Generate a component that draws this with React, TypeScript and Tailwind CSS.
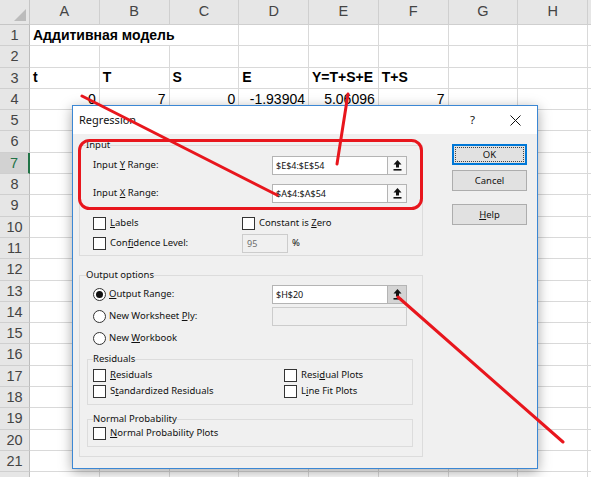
import React from "react";

type Cell = { text: string; bold?: boolean; right?: boolean; span?: number };

const COLS = ["A", "B", "C", "D", "E", "F", "G", "H", ""];
const ROWS = Array.from({ length: 22 }, (_, i) => i + 1);

const cells: Record<string, Cell> = {
  A1: { text: "Аддитивная модель", bold: true, span: 3 },
  A3: { text: "t", bold: true },
  B3: { text: "T", bold: true },
  C3: { text: "S", bold: true },
  D3: { text: "E", bold: true },
  E3: { text: "Y=T+S+E", bold: true },
  F3: { text: "T+S", bold: true },
  A4: { text: "0", right: true },
  B4: { text: "7", right: true },
  C4: { text: "0", right: true },
  D4: { text: "-1.93904", right: true },
  E4: { text: "5.06096", right: true },
  F4: { text: "7", right: true },
};

// cells hidden under the A1 span
const covered = new Set(["B1", "C1"]);

function Sheet() {
  return (
    <div className="grid grid-cols-[30px_repeat(8,69.75px)_20px] grid-rows-[25px_repeat(22,21.3px)] font-['Liberation_Sans',Arial,sans-serif] text-[14px] text-black">
      <div className="relative border-b border-r border-[#c6c6c6] bg-[#e6e6e6]">
        <svg className="absolute bottom-[3px] right-[3px]" width="12" height="12" viewBox="0 0 12 12">
          <polygon points="12,0 12,12 0,12" fill="#bcbcbc" />
        </svg>
      </div>
      {COLS.map((c, i) => (
        <div
          key={`h${i}`}
          className="grid place-items-center border-b border-r border-[#cfcfcf] bg-[#e6e6e6] text-[14.5px] text-[#444]"
        >
          {c}
        </div>
      ))}
      {ROWS.map((r) => (
        <React.Fragment key={r}>
          <div
            className={
              r === 7
                ? "grid place-items-center border-b border-r-2 border-b-[#cfcfcf] border-r-[#217346] bg-[#d2d2d2] text-[14.5px] text-[#217346]"
                : "grid place-items-center border-b border-r border-b-[#cfcfcf] border-r-[#bdbdbd] bg-[#e6e6e6] text-[14.5px] text-[#444]"
            }
          >
            {r < 22 ? r : null}
          </div>
          {COLS.map((c, i) => {
            const key = `${c}${r}`;
            if (covered.has(key)) return null;
            const cell = c ? cells[key] : undefined;
            return (
              <div
                key={`${r}-${i}`}
                className={`flex items-center overflow-hidden whitespace-nowrap border-b border-r border-[#d9d9d9] px-[3px] ${
                  cell?.span === 3 ? "col-span-3" : ""
                } ${cell?.right ? "justify-end" : ""} ${cell?.bold ? "font-bold" : ""}`}
              >
                {cell?.text}
              </div>
            );
          })}
        </React.Fragment>
      ))}
    </div>
  );
}

function CheckBox() {
  return <span className="h-[13px] w-[13px] shrink-0 border border-[#333] bg-white" />;
}

function Radio({ on }: { on?: boolean }) {
  return (
    <span className="grid h-[13px] w-[13px] shrink-0 place-items-center rounded-full border border-[#333] bg-white">
      {on ? <span className="h-[7px] w-[7px] rounded-full bg-[#111]" /> : null}
    </span>
  );
}

function CollapseIcon() {
  return (
    <svg width="9" height="11" viewBox="0 0 9 11">
      <polygon points="4.5,0 8.5,4.5 6,4.5 6,7.5 3,7.5 3,4.5 0.5,4.5" fill="#111" />
      <rect x="0.5" y="9" width="8" height="1.6" fill="#111" />
    </svg>
  );
}

function RefField({ value, pressed }: { value: string; pressed?: boolean }) {
  return (
    <div className="flex h-[19px] w-[135px] border border-[#b4b4b4] bg-white">
      <div className="flex-1 pl-[3px] text-[9px] leading-[17px]">{value}</div>
      <div
        className={`grid w-[19px] place-items-center border-l border-[#b4b4b4] ${
          pressed ? "bg-[#d4d4d4]" : "bg-[#f6f6f6]"
        }`}
      >
        <CollapseIcon />
      </div>
    </div>
  );
}

function Btn({ children, focus }: { children: React.ReactNode; focus?: boolean }) {
  if (focus) {
    return (
      <div className="h-[21px] border-2 border-[#0078d7] bg-[#e1e1e1] p-[1px]">
        <div className="grid h-full place-items-center border border-dotted border-[#444] leading-none">{children}</div>
      </div>
    );
  }
  return (
    <div className="grid h-[21px] place-items-center border border-[#adadad] bg-[#e1e1e1] leading-none">{children}</div>
  );
}

function Dialog() {
  return (
    <div className="absolute left-[72px] top-[105px] flex h-[364px] w-[466px] flex-col border border-[#3b87d4] bg-[#f0f0f0] font-['Noto_Sans',sans-serif] text-[9.5px] text-[#111] shadow-[0_3px_12px_rgba(0,0,0,0.35)]">
      <div className="flex h-[28px] shrink-0 items-center bg-white pl-[6px] pr-[16px]">
        <span className="text-[11px]">Regression</span>
        <span className="ml-auto text-[11.5px]">?</span>
        <svg className="ml-[35px]" width="11" height="11" viewBox="0 0 11 11">
          <path d="M0.5 0.5 L10.5 10.5 M10.5 0.5 L0.5 10.5" stroke="#111" strokeWidth="1" />
        </svg>
      </div>

      <div className="flex flex-1 pl-[6px] pt-[5px]">
        <div className="w-[344px]">
          <fieldset className="border border-[#dcdcdc] pb-[2px]">
            <legend className="ml-[6px] leading-[12px]">Input</legend>
            <div className="pl-[13px]">
              <div className="mt-[5px] flex h-[19px] items-center">
                <span className="w-[179px]">
                  Input <u>Y</u> Range:
                </span>
                <RefField value="$E$4:$E$54" />
              </div>
              <div className="mt-[9px] flex h-[19px] items-center">
                <span className="w-[179px]">
                  Input <u>X</u> Range:
                </span>
                <RefField value="$A$4:$A$54" />
              </div>
              <div className="mt-[14px] flex h-[13px] items-center">
                <span className="flex w-[149px] items-center gap-[4px]">
                  <CheckBox />
                  <span>
                    <u>L</u>abels
                  </span>
                </span>
                <span className="flex items-center gap-[4px]">
                  <CheckBox />
                  <span>
                    Constant is <u>Z</u>ero
                  </span>
                </span>
              </div>
              <div className="mt-[4px] flex h-[19px] items-center">
                <span className="flex w-[149px] items-center gap-[4px]">
                  <CheckBox />
                  <span>
                    Con<u>f</u>idence Level:
                  </span>
                </span>
                <span className="h-[19px] w-[46px] border border-[#cccccc] bg-[#f0f0f0] pl-[4px] text-[9px] leading-[17px] text-[#6d6d6d]">
                  95
                </span>
                <span className="ml-[4px]">%</span>
              </div>
            </div>
          </fieldset>

          <fieldset className="mt-[13px] border border-[#dcdcdc] pb-[9px]">
            <legend className="ml-[6px] leading-[12px]">Output options</legend>
            <div className="pl-[13px]">
              <div className="mt-[4px] flex h-[19px] items-center">
                <span className="flex w-[179px] items-center gap-[3px]">
                  <Radio on />
                  <span>
                    <u>O</u>utput Range:
                  </span>
                </span>
                <RefField value="$H$20" pressed />
              </div>
              <div className="mt-[3px] flex h-[19px] items-center">
                <span className="flex w-[179px] items-center gap-[3px]">
                  <Radio />
                  <span>
                    New Worksheet <u>P</u>ly:
                  </span>
                </span>
                <span className="h-[19px] w-[135px] border border-[#cccccc] bg-[#f0f0f0]" />
              </div>
              <div className="mt-[3px] flex h-[19px] items-center gap-[3px]">
                <Radio />
                <span>
                  New <u>W</u>orkbook
                </span>
              </div>
            </div>

            <fieldset className="ml-[7px] mr-[9px] mt-[5px] border border-[#dcdcdc] pb-[5px]">
              <legend className="ml-[5px] leading-[12px]">Residuals</legend>
              <div className="mt-[2px] pl-[5px]">
                <div className="flex h-[16px] items-center">
                  <span className="flex w-[191px] items-center gap-[4px]">
                    <CheckBox />
                    <span>
                      <u>R</u>esiduals
                    </span>
                  </span>
                  <span className="flex items-center gap-[4px]">
                    <CheckBox />
                    <span>
                      Resi<u>d</u>ual Plots
                    </span>
                  </span>
                </div>
                <div className="flex h-[16px] items-center">
                  <span className="flex w-[191px] items-center gap-[4px]">
                    <CheckBox />
                    <span>
                      S<u>t</u>andardized Residuals
                    </span>
                  </span>
                  <span className="flex items-center gap-[4px]">
                    <CheckBox />
                    <span>
                      L<u>i</u>ne Fit Plots
                    </span>
                  </span>
                </div>
              </div>
            </fieldset>

            <fieldset className="ml-[7px] mr-[9px] mt-[8px] border border-[#dcdcdc] pb-[5px]">
              <legend className="ml-[5px] leading-[12px]">Normal Probability</legend>
              <div className="flex h-[16px] items-center gap-[4px] pl-[5px]">
                <CheckBox />
                <span>
                  <u>N</u>ormal Probability Plots
                </span>
              </div>
            </fieldset>
          </fieldset>
        </div>

        <div className="ml-[29px] flex w-[75px] flex-col pt-[5px]">
          <Btn focus>OK</Btn>
          <div className="mt-[5px]">
            <Btn>Cancel</Btn>
          </div>
          <div className="mt-[13px]">
            <Btn>
              <span>
                <u>H</u>elp
              </span>
            </Btn>
          </div>
        </div>
      </div>
    </div>
  );
}

function Annotations() {
  return (
    <svg className="pointer-events-none absolute left-0 top-0" width="591" height="477" viewBox="0 0 591 477">
      <rect x="79.5" y="140.5" width="342" height="68" rx="10" fill="none" stroke="#e8161d" strokeWidth="3" />
      <g stroke="#e8161d" strokeWidth="3" strokeLinecap="round">
        <line x1="82" y1="96" x2="277" y2="195" />
        <line x1="348" y1="94" x2="337" y2="164" />
        <line x1="398" y1="297" x2="563" y2="442" />
      </g>
    </svg>
  );
}

export default function App() {
  return (
    <div className="relative h-[477px] w-[591px] overflow-hidden bg-white">
      <Sheet />
      <Dialog />
      <Annotations />
    </div>
  );
}
